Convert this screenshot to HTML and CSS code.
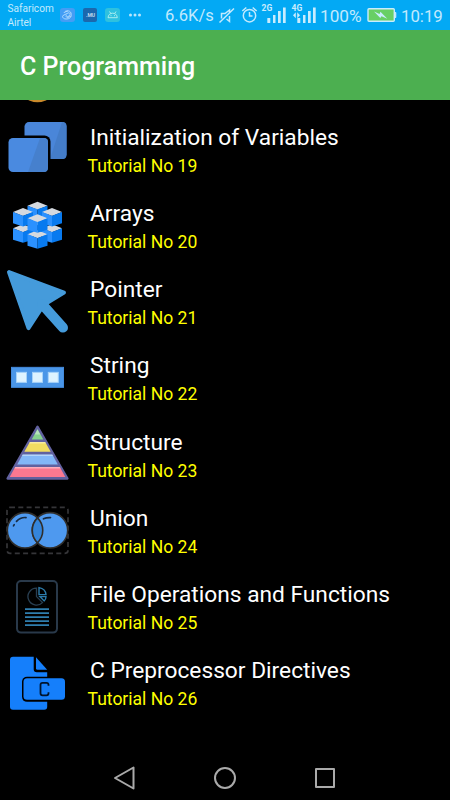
FILE: index.html
```html
<!DOCTYPE html>
<html lang="en">
<head>
<meta charset="utf-8">
<title>C Programming</title>
<link rel="stylesheet" href="styles.css">
</head>
<body>
<div class="screen">
  <header class="status">
    <div class="carriers"><span>Safaricom</span><span>Airtel</span></div>
    <svg class="notices" viewBox="58 0 90 30">
      <rect x="60" y="8" width="15" height="14" rx="3" fill="#439df5"/>
      <g fill="none" stroke="#b4ddff" stroke-width=".9"><path d="M64 13c1-3 6-3 7 0 1 4-1 6-5 6-3 0-5-3-2-4l4-2c2-1 3 2 1 3l-2 1c-2 0-1-2 0-2M65 12l3-1M67 18l4-2"/></g>
      <rect x="83" y="8" width="14" height="14" rx="2" fill="#1b68ad"/>
      <text class="badge-text" x="86" y="16.500">.MU</text>
      <rect x="105" y="8" width="15" height="14" rx="3" fill="#2ec1df"/>
      <path d="M108 17.700c.3-6 9-6 9.300 0zM109.500 11.500l1.300 2M116 11.500l-1.300 2M110.500 15.700h1M114 15.700h1" fill="none" stroke="#b7f2f2" stroke-width=".9"/>
      <g fill="#b9e5fc"><circle cx="130.500" cy="15" r="1.500"/><circle cx="135" cy="15" r="1.500"/><circle cx="139.500" cy="15" r="1.500"/></g>
    </svg>
    <span class="speed">6.6K/s</span>
    <svg class="signals" viewBox="216 0 104 30">
      <g fill="none" stroke="#c2e9fd" stroke-width="1.500">
        <path d="M219.500 22.500L234 8.500M221.500 18.500v-5h3.500l4.500-3.500v2.500M229.500 16v5.500l-3-2.500"/>
        <circle cx="249.500" cy="15.700" r="6.200"/><path d="M249.500 12v4h3M242.300 11l4-3.500M252.700 7.500l4 3.500" />
      </g>
      <text class="net" x="261.500" y="11">2G</text><text class="net" x="291.500" y="11">4G</text>
      <g fill="#c9ecfe">
        <rect x="267.300" y="18" width="3" height="5" rx=".5"/><rect x="273" y="15" width="2.500" height="8"/><rect x="278" y="11" width="2.700" height="12"/><rect x="283" y="7.500" width="2.700" height="15.500"/>
        <rect x="297.300" y="18" width="3" height="5" rx=".5"/><rect x="303" y="15" width="2.500" height="8"/><rect x="308" y="11" width="2.700" height="12"/><rect x="313" y="7.500" width="2.700" height="15.500"/>
        <path d="M293 15.300l2.800-3v6zM300 15.300l-2.800-3v6z"/>
      </g>
    </svg>
    <span class="percent">100%</span>
    <svg class="battery" viewBox="366 0 32 30">
      <rect x="368" y="8.700" width="26.300" height="12.600" rx="1" fill="#68cf65" stroke="#c9ecfe" stroke-width="1.400"/>
      <path d="M394.500 12.500h1.300v5h-1.300" fill="#c9ecfe" stroke="#c9ecfe"/>
      <path d="M374 11.500l5.500 2.500 1-2.200 6.800 7-5.800-2.600-1.200 1.800z" fill="#c9ecfe"/>
    </svg>
    <time class="clock">10:19</time>
  </header>
  <h1 class="appbar">C Programming</h1>
  <main class="list">
    <div class="previous"><svg viewBox="0 100 80 9.400"><circle cx="37.500" cy="82.500" r="19.800" fill="#c98a2b"/></svg></div>
    <article class="row">
      <svg viewBox="0 109.400 80 76.250">
        <rect x="24.500" y="122.500" width="42" height="37" rx="4.500" fill="#4a86d9"/><path d="M62 122.500h.5q4 0 4 4V155q0 4.500-4 4.500H50z" fill="#447dc9"/>
        <rect x="5" y="136" width="45.500" height="40" rx="6" fill="#000"/>
        <rect x="8.500" y="138.300" width="39.500" height="34.200" rx="4.500" fill="#4a8ae0"/><path d="M40 138.300h4q4 0 4 4V168q0 4.500-4 4.500H28z" fill="#4680cd"/>
      </svg>
      <div class="copy"><h2>Initialization of Variables</h2><p>Tutorial No 19</p></div>
    </article>
    <article class="row">
      <svg viewBox="0 185.650 80 76.250">
        <defs><g id="cube"><path d="M-10 0L0-4 10 0 0 4z" fill="#d5d9df"/><path d="M-10 0L0 3.700V14.500l-10-3.200z" fill="#2b91ff"/><path d="M10 0L0 3.700V14.500l10-3.200z" fill="#087aef"/></g></defs>
        <use href="#cube" x="37.500" y="221"/><use href="#cube" x="23" y="228"/><use href="#cube" x="52" y="228"/><use href="#cube" x="37.500" y="205.300"/><use href="#cube" x="23" y="211.700"/><use href="#cube" x="52" y="211.700"/>
        <use href="#cube" x="37.500" y="234"/><use href="#cube" x="37.500" y="218"/>
      </svg>
      <div class="copy"><h2>Arrays</h2><p>Tutorial No 20</p></div>
    </article>
    <article class="row">
      <svg viewBox="0 261.900 80 76.250"><path d="M9 272L64 292.500 43.500 305 28.500 328z" fill="#459bdb" stroke="#459bdb" stroke-width="4" stroke-linejoin="round"/><path d="M42 304L63 327.500" stroke="#459bdb" stroke-width="10" stroke-linecap="round"/></svg>
      <div class="copy"><h2>Pointer</h2><p>Tutorial No 21</p></div>
    </article>
    <article class="row">
      <svg viewBox="0 338.150 80 76.250"><rect x="11.500" y="367.500" width="52" height="20" fill="#4a96e8" stroke="#438adb"/><g fill="#def3ff" stroke="#a6d3fa"><rect x="16.500" y="372.500" width="10" height="10"/><rect x="32.500" y="372.500" width="10" height="10"/><rect x="48.300" y="372.500" width="10" height="10"/></g></svg>
      <div class="copy"><h2>String</h2><p>Tutorial No 22</p></div>
    </article>
    <article class="row">
      <svg viewBox="0 414.400 80 76.250">
        <path d="M37.500 427L67.500 479H7.500z" fill="#61619f" stroke="#61619f" stroke-width="2.200" stroke-linejoin="round"/>
        <path d="M37.500 429.500L43.300 439.800H31.700z" fill="#87d38e"/><path d="M29.800 442.500h15.400l5.500 9.600H24.300z" fill="#f0dc61"/><path d="M22.700 455h29.600l5.500 10H17.200z" fill="#82b7f8"/><path d="M15.200 467.500h44.600l5.500 10H9.700z" fill="#fa7890"/>
        <path d="M37.500 430l2.800 5h-5.600zM29.800 442.500h15.400l.8 1.500H29zM22.700 455h29.600l.8 1.500H21.900zM15.200 467.500h44.600l.8 1.500H14.400z" fill="#ffffff" opacity=".4"/>
      </svg>
      <div class="copy"><h2>Structure</h2><p>Tutorial No 23</p></div>
    </article>
    <article class="row">
      <svg viewBox="0 490.650 80 76.250">
        <rect x="7" y="507" width="61" height="46" rx="3" fill="none" stroke="#353538" stroke-width="1.700" stroke-dasharray="5 3.300"/>
        <g fill="#4e99ef" stroke="#302e2b" stroke-width="1.600"><circle cx="25" cy="530" r="17.700"/><circle cx="50" cy="530" r="17.700"/><path d="M37.500 517.500c7 7 7 18 0 25-7-7-7-18 0-25z" fill="#3485dc"/></g>
        <path d="M16.500 521q4-4.300 9.500-3.800M43.500 518.500q3-1.500 7-1.300M13.500 525.500l.7-1.200" fill="none" stroke="#172b42" stroke-width="1.700" stroke-linecap="round"/>
      </svg>
      <div class="copy"><h2>Union</h2><p>Tutorial No 24</p></div>
    </article>
    <article class="row">
      <svg viewBox="0 566.900 80 76.250" fill="none">
        <rect x="17" y="581" width="40" height="51.500" rx="4" stroke="#29394a" stroke-width="2"/>
        <path d="M36.500 588a8.500 8.500 0 1 0 6 14.500l-6-6z" stroke="#293f52" stroke-width="1.300"/>
        <path d="M39 587.500v7h7q-.5-6-7-7zM40 596.500h6q0 3-1.800 4.300z" stroke="#2c7cac" stroke-width="1.400"/>
        <path d="M25 609h24M25 613h24M25 617h24M25 621h24M25 625h24" stroke="#2f7eae" stroke-width="1.800"/>
      </svg>
      <div class="copy"><h2>File Operations and Functions</h2><p>Tutorial No 25</p></div>
    </article>
    <article class="row">
      <svg viewBox="0 643.150 80 76.250">
        <path d="M13 657H33.700V669.500q0 3 3 3H47.200V707q0 3-3 3H13q-3 0-3-3V660q0-3 3-3z" fill="#157ffb"/><path d="M36 657.500L47.200 670H37.500q-1.500 0-1.500-1.500z" fill="#157ffb"/>
        <rect x="22" y="677" width="44.500" height="25" rx="5" fill="#000"/><rect x="23.500" y="678.500" width="41.500" height="21.500" rx="3.500" fill="#157ffb"/>
        <path d="M48.500 686v-1q0-2-2-2h-4q-2 0-2 2v8.500q0 2 2 2h4q2 0 2-2v-1" fill="none" stroke="#00152e" stroke-width="1.800"/>
      </svg>
      <div class="copy"><h2>C Preprocessor Directives</h2><p>Tutorial No 26</p></div>
    </article>
  </main>
  <nav class="navbar" aria-label="System navigation">
    <svg viewBox="0 0 24 24"><path d="M20.500 1.500v21L2 12z"/></svg>
    <svg viewBox="0 0 24 24"><circle cx="12" cy="12" r="10"/></svg>
    <svg viewBox="0 0 24 24"><rect x="3" y="3" width="18" height="18"/></svg>
  </nav>
</div>
</body>
</html>
```
FILE: styles.css
```css
* { box-sizing: border-box; }
body { margin: 0; background: #000; font-family: Roboto, sans-serif; }
svg { display: block; flex: none; }
h1, h2, p { margin: 0; font-weight: 400; white-space: nowrap; }
.screen { width: 450px; height: 800px; display: flex; flex-direction: column; overflow: hidden; background: #000; }
.status { height: 30px; flex: none; display: flex; align-items: center; padding-left: 7px; background: #03a9f4; color: #c2e9fd; white-space: nowrap; }
.status svg { height: 30px; }
.carriers { width: 51px; flex: none; display: flex; flex-direction: column; font-size: 10.1px; line-height: 13.5px; padding: 1px 0 0 .5px; }
.notices { width: 90px; }
.badge-text { font-size: 5px; font-weight: 700; fill: #c0dcf0; }
.speed { width: 68px; flex: none; padding-left: 17px; font-size: 16.6px; padding-top: 1px; }
.signals { width: 104px; }
.net { font-size: 8.5px; font-weight: 700; fill: #c9ecfe; }
.percent { width: 46px; flex: none; font-size: 17.2px; padding-top: 1px; }
.battery { width: 32px; }
.clock { padding-left: 3px; font-size: 16.8px; padding-top: 1px; }
.appbar { height: 70px; flex: none; padding: 2px 20px 0; background: #4caf50; color: #fff; font-size: 25px; font-weight: 500; line-height: 70px; }
.list { flex: 1; min-height: 0; }
.previous { height: 9.4px; }
.previous svg { width: 80px; height: 9.4px; }
.row { height: 76.25px; display: flex; }
.row > svg { width: 80px; height: 76.25px; }
.copy { padding: 13.2px 0 0 7.5px; }
.row h2 { padding-left: 2.5px; color: #fff; font-size: 22.72px; line-height: 29px; }
.row p { color: #ff0; font-size: 17.55px; line-height: 29.4px; }
.navbar { height: 45px; flex: none; display: flex; justify-content: center; gap: 76px; }
.navbar svg { width: 24px; height: 24px; margin-top: 10.5px; fill: none; stroke: #aaa; stroke-width: 2; stroke-linejoin: round; }
```
